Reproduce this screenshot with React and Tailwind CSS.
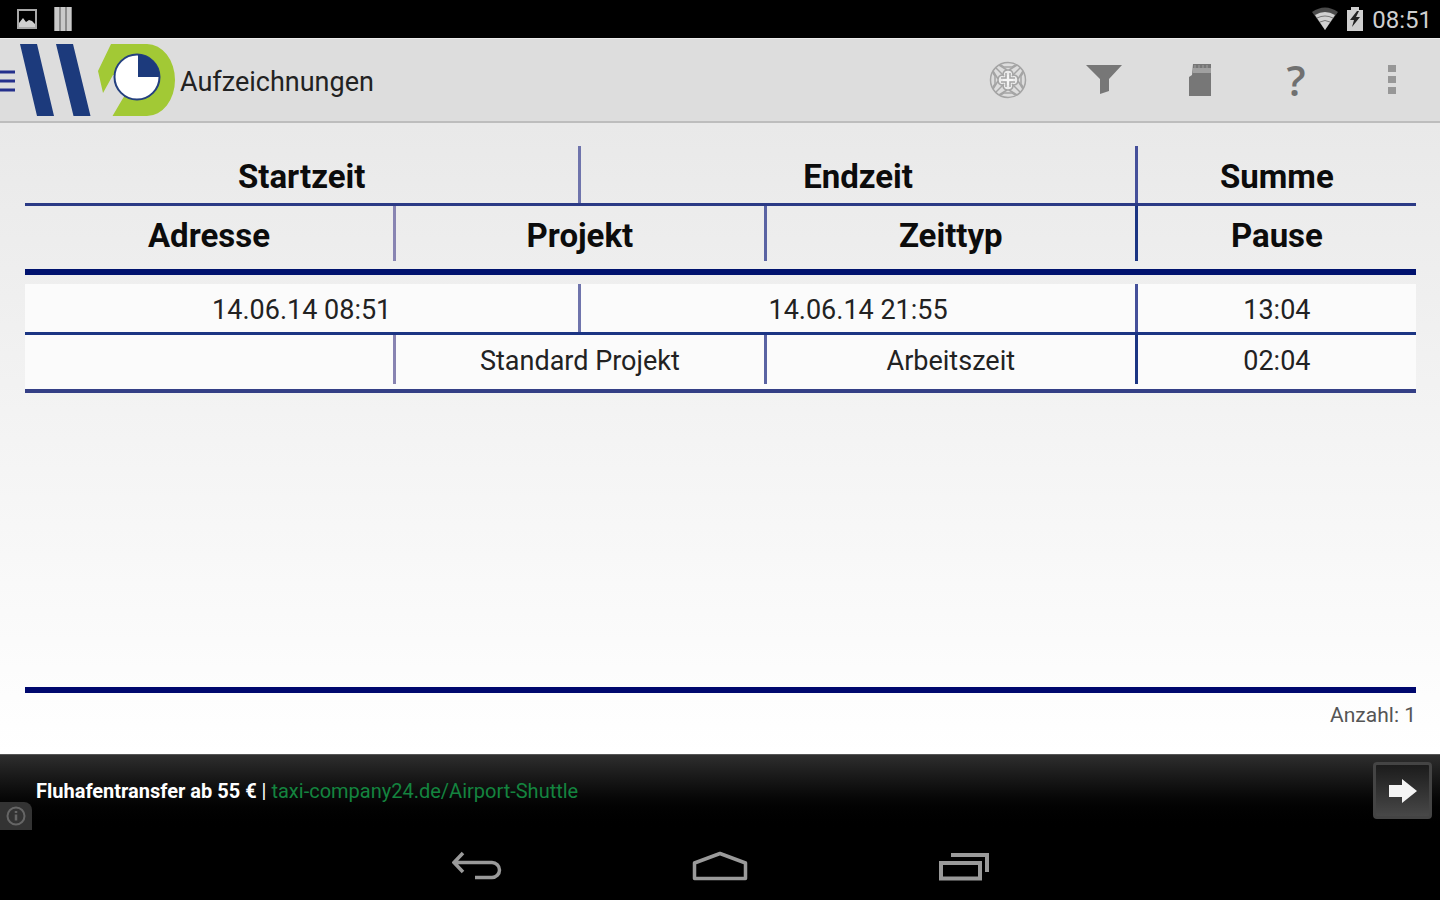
const records = [
    {
        start: "14.06.14 08:51",
        end: "14.06.14 21:55",
        total: "13:04",
        address: "",
        project: "Standard Projekt",
        type: "Arbeitszeit",
        pause: "02:04",
    },
]

function StatusBar() {
    return (
        <div className="bg-black h-[38px] pl-4 pr-2 flex items-center justify-between text-[#cfcfcf]">
            <div className="flex items-center gap-4">
                <svg width="22" height="24" viewBox="0 0 22 24" aria-hidden="true">
                    <rect x="2" y="3" width="18" height="18" fill="none" stroke="#a8a8a8" strokeWidth="2" />
                    <path d="M3 20v-4l4-5 3 4 3-2 3 1 3 3v3z" fill="#cfcfcf" />
                </svg>
                <svg width="20" height="24" viewBox="0 0 20 24" aria-hidden="true">
                    <rect x="0" y="0" width="18" height="24" fill="#8c8c8c" />
                    <path d="M1 0h4v24H1zM7 0h4v24H7zM13 0h4v24h-4z" fill="#cacaca" />
                </svg>
            </div>
            <div className="flex items-center gap-2">
                <svg width="26" height="24" viewBox="0 0 26 24" aria-hidden="true">
                    <path d="M0 5Q13-4 26 5L13 23z" fill="#4a4a4a" />
                    <path d="M3 8Q13 2 23 8L13 23z" fill="#d0d0d0" />
                    <path d="M5 11q8-4 16 0M8 15q5-3 10 0" fill="none" stroke="#777" strokeWidth="1" />
                </svg>
                <svg width="18" height="24" viewBox="0 0 18 24" aria-hidden="true">
                    <path d="M1 3h4V0h8v3h4v21H1z" fill="#cfcfcf" />
                    <path d="M11 4l-7 9h4l-2 7 8-10h-4l3-6z" fill="#222" />
                </svg>
                <span className="text-2xl leading-8 pt-0.5">08:51</span>
            </div>
        </div>
    )
}

function Logo() {
    return (
        <svg width="176" height="84" viewBox="0 38 176 84" aria-hidden="true">
            <path d="M0 72h15M0 81h15M0 90h15" stroke="#24308c" strokeWidth="3" />
            <path d="M20 44h17l17 72H37zM56 44h17l17.500 72h-17z" fill="#1c3a7c" />
            <path d="M111 44h36a28 36 0 0 1 0 72h-34.500l10-17L137 77l-24-2-10 18-5-22z" fill="#a2c935" />
            <circle cx="137" cy="77" r="22.500" fill="#fff" stroke="#24407f" strokeWidth="2" />
            <path d="M138 77V54.500A22.500 22.500 0 0 1 159.500 77z" fill="#1c3a7c" />
        </svg>
    )
}

function ActionButton({ label, children }) {
    return (
        <button aria-label={label} className="w-24 h-full flex items-center justify-center cursor-pointer">
            {children}
        </button>
    )
}

function ActionBar() {
    return (
        <header className="h-[85px] bg-[#dddddd] border-t border-t-[#ededed] border-b-2 border-b-[#bdbdbd] flex items-center justify-between">
            <div className="flex items-center gap-1">
                <button aria-label="Menü" className="cursor-pointer">
                    <Logo />
                </button>
                <h1 className="text-[27px] leading-8 pt-1 text-[#222]">Aufzeichnungen</h1>
            </div>
            <div className="flex h-full">
                <ActionButton label="Ziel">
                    <svg width="38" height="38" viewBox="0 0 38 38" fill="none" stroke="#a4a4a4" strokeWidth="1.500">
                        <circle cx="19" cy="19" r="17.500" />
                        <path d="M19 9c3 0 5 2 5 5 3 0 5 2 5 5s-2 5-5 5c0 3-2 5-5 5s-5-2-5-5c-3 0-5-2-5-5s2-5 5-5c0-3 2-5 5-5z" fill="#ececec" />
                        <path d="M10 4l8 5M4 10l5 8M28 4l-8 5M34 10l-5 8M10 34l8-5M4 28l5-8M28 34l-8-5M34 28l-5-8" />
                        <path d="M7 7l8 8M31 7l-8 8M7 31l8-8M31 31l-8-8" />
                        <path d="M12 4l3 2h8l3-2M12 34l3-2h8l3 2M4 12l2 3v8l-2 3M34 12l-2 3v8l2 3" />
                        <path d="M17 12v5h-5M21 12v5h5M17 26v-5h-5M21 26v-5h5" />
                        <path d="M19 14v10M14 19h10" stroke="#f6f6f6" strokeWidth="2" />
                    </svg>
                </ActionButton>
                <ActionButton label="Filter">
                    <svg width="36" height="32" viewBox="0 0 36 32">
                        <path d="M0 1h36L23 15v12l-9 3V15z" fill="#777" />
                    </svg>
                </ActionButton>
                <ActionButton label="Speicherkarte">
                    <svg width="22" height="34" viewBox="0 0 22 34">
                        <path d="M4 1h18v32H0V14l3-2z" fill="#777" />
                        <path d="M4 5h18v5H4z" fill="#a0a0a0" />
                        <path d="M6 2v3M10 2v3M14 2v3M18 2v3" stroke="#a0a0a0" strokeWidth="1" />
                    </svg>
                </ActionButton>
                <ActionButton label="Hilfe">
                    <span className="font-['Open_Sans',sans-serif] font-semibold text-[42px] leading-none text-[#707070]">?</span>
                </ActionButton>
                <ActionButton label="Mehr">
                    <svg width="8" height="32" viewBox="0 0 8 32" fill="#979797">
                        <path d="M0 1h8v7H0zM0 12h8v7H0zM0 23h8v7H0z" />
                    </svg>
                </ActionButton>
            </div>
        </header>
    )
}

function RecordTable() {
    return (
        <table className="w-full table-fixed border-separate border-spacing-0 text-center">
            <colgroup>
                <col className="w-4/15" />
                <col className="w-2/15" />
                <col className="w-2/15" />
                <col className="w-4/15" />
                <col className="w-3/15" />
            </colgroup>
            <thead className="text-[33px] leading-none text-[#0c0c0c]">
                <tr>
                    <th colSpan={2} className="p-0 border-b-3 border-[#2b3a85]">
                        <div className="h-[57px] pt-1 flex items-center justify-center border-r-3 border-[#6f74ac]">Startzeit</div>
                    </th>
                    <th colSpan={2} className="p-0 border-b-3 border-[#2b3a85]">
                        <div className="h-[57px] pt-1 flex items-center justify-center border-r-3 border-[#45509a]">Endzeit</div>
                    </th>
                    <th className="p-0 border-b-3 border-[#2b3a85]">
                        <div className="h-[57px] pt-1 flex items-center justify-center">Summe</div>
                    </th>
                </tr>
                <tr>
                    <th className="p-0 pb-2 border-b-6 border-[#00126e]">
                        <div className="h-[55px] pt-1 flex items-center justify-center border-r-3 border-[#8884b2]">Adresse</div>
                    </th>
                    <th colSpan={2} className="p-0 pb-2 border-b-6 border-[#00126e]">
                        <div className="h-[55px] pt-1 flex items-center justify-center border-r-3 border-[#5a63a3]">Projekt</div>
                    </th>
                    <th className="p-0 pb-2 border-b-6 border-[#00126e]">
                        <div className="h-[55px] pt-1 flex items-center justify-center border-r-3 border-[#1b3583]">Zeittyp</div>
                    </th>
                    <th className="p-0 pb-2 border-b-6 border-[#00126e]">
                        <div className="h-[55px] pt-1 flex items-center justify-center">Pause</div>
                    </th>
                </tr>
            </thead>
            {records.map((record) => (
                <tbody key={record.start} className="text-[27px] leading-none text-[#222] before:block before:h-[9px]">
                    <tr className="bg-[#fbfbfb]">
                        <td colSpan={2} className="p-0 border-b-3 border-[#1b3583]">
                            <div className="h-12 pt-1 flex items-center justify-center border-r-3 border-[#6f74ac]">{record.start}</div>
                        </td>
                        <td colSpan={2} className="p-0 border-b-3 border-[#1b3583]">
                            <div className="h-12 pt-1 flex items-center justify-center border-r-3 border-[#45509a]">{record.end}</div>
                        </td>
                        <td className="p-0 border-b-3 border-[#1b3583]">
                            <div className="h-12 pt-1 flex items-center justify-center">{record.total}</div>
                        </td>
                    </tr>
                    <tr className="bg-[#fbfbfb]">
                        <td className="p-0 pb-[5px] border-b-4 border-[#343f86]">
                            <div className="h-[49px] pt-1 flex items-center justify-center border-r-3 border-[#8884b2]">{record.address}</div>
                        </td>
                        <td colSpan={2} className="p-0 pb-[5px] border-b-4 border-[#343f86]">
                            <div className="h-[49px] pt-1 flex items-center justify-center border-r-3 border-[#5a63a3]">{record.project}</div>
                        </td>
                        <td className="p-0 pb-[5px] border-b-4 border-[#343f86]">
                            <div className="h-[49px] pt-1 flex items-center justify-center border-r-3 border-[#1b3583]">{record.type}</div>
                        </td>
                        <td className="p-0 pb-[5px] border-b-4 border-[#343f86]">
                            <div className="h-[49px] pt-1 flex items-center justify-center">{record.pause}</div>
                        </td>
                    </tr>
                </tbody>
            ))}
        </table>
    )
}

function AdBanner() {
    return (
        <aside className="relative h-[76px] border-t border-[#555] bg-linear-to-b from-[#2e2e2e] to-black pl-9 pr-2 pb-1 flex items-center justify-between">
            <p className="text-xl leading-6 text-white">
                <span className="font-bold">Fluhafentransfer ab 55 €</span> |{" "}
                <a href="#shuttle" className="text-[#14843f]">taxi-company24.de/Airport-Shuttle</a>
            </p>
            <button
                aria-label="Anzeige öffnen"
                className="w-[59px] h-[57px] border-3 border-[#444] rounded-sm bg-linear-to-b from-[#1c1c1c] to-[#484848] flex items-center justify-center cursor-pointer"
            >
                <svg width="28" height="26" viewBox="0 0 28 26">
                    <path d="M0 7h13V1l15 12-15 12v-6H0z" fill="#f4f4f4" />
                </svg>
            </button>
            <button aria-label="Info" className="absolute left-0 bottom-0 w-8 h-7 bg-[#333] rounded-tr-lg flex items-center justify-center">
                <svg width="20" height="22" viewBox="0 0 20 22" fill="none" stroke="#666" strokeWidth="2">
                    <circle cx="10" cy="11" r="8.500" />
                    <path d="M10 9.500v6M10 6v2" strokeWidth="2.500" />
                </svg>
            </button>
        </aside>
    )
}

function NavBar() {
    return (
        <nav className="h-[70px] pt-0.5 bg-black flex items-center justify-center">
            <button aria-label="Zurück" className="w-[243px] h-full flex items-center justify-center cursor-pointer">
                <svg width="50" height="30" viewBox="0 0 50 30" fill="none" stroke="#9a9a9a" strokeWidth="3.500">
                    <path d="M11 2L2 11.500 11 21M2 11.500h38a7.500 7.500 0 0 1 0 15H23" />
                </svg>
            </button>
            <button aria-label="Startseite" className="w-[243px] h-full flex items-center justify-center cursor-pointer">
                <svg width="56" height="30" viewBox="0 0 56 30" fill="none" stroke="#9a9a9a" strokeWidth="3.500">
                    <path d="M2.500 27.500V12L28 2.500 53.500 12v15.500z" strokeLinejoin="round" />
                </svg>
            </button>
            <button aria-label="Letzte Apps" className="w-[243px] h-full flex items-center justify-center cursor-pointer">
                <svg width="52" height="30" viewBox="0 0 52 30" fill="none" stroke="#9a9a9a" strokeWidth="4">
                    <path d="M4 12h39v15.500H4z" />
                    <path d="M14 4h36v17" />
                </svg>
            </button>
        </nav>
    )
}

export default function App() {
    return (
        <div className="min-h-screen flex flex-col font-[Roboto,sans-serif]">
            <StatusBar />
            <ActionBar />
            <main className="flex-1 flex flex-col justify-between bg-linear-to-b from-[#e9e9e9] to-white pt-[23px] pl-[25px] pr-6">
                <RecordTable />
                <p className="border-t-6 border-[#00086e] pt-2 pb-[25px] text-[21px] leading-7 text-right text-[#555]">
                    Anzahl: 1
                </p>
            </main>
            <AdBanner />
            <NavBar />
        </div>
    )
}
